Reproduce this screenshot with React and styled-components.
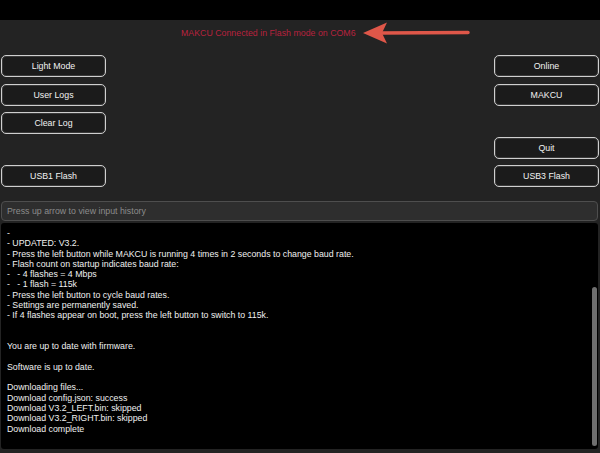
import styled, { createGlobalStyle } from 'styled-components';

const GlobalStyle = createGlobalStyle`
  html, body {
    margin: 0;
    padding: 0;
    background: #232323;
  }
  body {
    font-family: "Liberation Sans", Arial, sans-serif;
  }
`;

// --- layout ---

const Page = styled.div`
  width: 600px;
  height: 453px;
  display: flex;
  flex-direction: column;
  background: #232323;
  overflow: hidden;
`;

const TopBar = styled.div`
  height: 20px;
  background: #000;
  flex-shrink: 0;
`;

const StatusRow = styled.div`
  height: 35px;
  padding: 2px 0 0 181px;
  box-sizing: border-box;
  display: flex;
  align-items: flex-start;
`;

const StatusInner = styled.div`
  height: 22px;
  display: flex;
  align-items: center;
`;

const StatusText = styled.span`
  color: #b8223e;
  font-size: 8.8px;
  line-height: 12px;
`;

const Arrow = styled.svg`
  margin-left: 7px;
  display: block;
`;

const ButtonArea = styled.div`
  display: flex;
  justify-content: space-between;
  padding: 0 1px;
`;

const Column = styled.div`
  width: 105px;
  display: flex;
  flex-direction: column;
  gap: 6.5px;
`;

const Spacer = styled.div`
  height: ${(p) => p.$h}px;
`;

const Button = styled.button`
  height: 22px;
  width: 100%;
  box-sizing: border-box;
  background: #1b1b1b;
  color: #f2f2f2;
  border: 1px solid #cfcfcf;
  border-radius: 5px;
  box-shadow: inset 0 0 0 1px #3a3a3a;
  font-family: "Liberation Sans", Arial, sans-serif;
  font-size: 8.8px;
  padding: 0;
  cursor: pointer;
`;

const InputRow = styled.div`
  padding: 13px 2px 0 1px;
`;

const CommandInput = styled.input`
  width: 100%;
  height: 20px;
  box-sizing: border-box;
  background: #2e2e2e;
  border: 1px solid #4e4e4e;
  border-radius: 4px;
  color: #ddd;
  font-family: "Liberation Sans", Arial, sans-serif;
  font-size: 8.8px;
  padding: 0 5px;
  outline: none;

  &::placeholder {
    color: #8c8c8c;
  }
`;

const LogBox = styled.div`
  position: relative;
  margin: 2px 2px 0 1px;
  height: 226px;
  background: #000;
  border-radius: 3px;
  padding: 5px 6px;
  box-sizing: border-box;
  overflow: hidden;
`;

const LogLine = styled.div`
  color: #f0f0f0;
  font-size: 8.8px;
  line-height: 10.3px;
  height: 10.3px;
  white-space: pre;
`;

const ScrollThumb = styled.div`
  position: absolute;
  right: 1px;
  top: 64px;
  width: 5px;
  height: 159px;
  border-radius: 3px;
  background: #6f6f6f;
`;

const logLines = [
  '-',
  '- UPDATED: V3.2.',
  '- Press the left button while MAKCU is running 4 times in 2 seconds to change baud rate.',
  '- Flash count on startup indicates baud rate:',
  '-   - 4 flashes = 4 Mbps',
  '-   - 1 flash = 115k',
  '- Press the left button to cycle baud rates.',
  '- Settings are permanently saved.',
  '- If 4 flashes appear on boot, press the left button to switch to 115k.',
  '',
  '',
  'You are up to date with firmware.',
  '',
  'Software is up to date.',
  '',
  'Downloading files...',
  'Download config.json: success',
  'Download V3.2_LEFT.bin: skipped',
  'Download V3.2_RIGHT.bin: skipped',
  'Download complete',
];

function App() {
  return (
    <Page>
      <GlobalStyle />
      <TopBar />

      <StatusRow>
        <StatusInner>
          <StatusText>MAKCU Connected in Flash mode on COM6</StatusText>
          {/* 빨간 화살표 (주석 표시) */}
          <Arrow width="108" height="22" viewBox="0 0 108 22">
            <line x1="18" y1="11" x2="105" y2="10.5" stroke="#df5749" strokeWidth="3.5" strokeLinecap="round" />
            <polygon points="0,11 24,0.5 19,11 24,21.5" fill="#df5749" />
          </Arrow>
        </StatusInner>
      </StatusRow>

      <ButtonArea>
        <Column>
          <Button>Light Mode</Button>
          <Button>User Logs</Button>
          <Button>Clear Log</Button>
          <Spacer $h={18} />
          <Button>USB1 Flash</Button>
        </Column>
        <Column>
          <Button>Online</Button>
          <Button>MAKCU</Button>
          <Spacer $h={18} />
          <Button>Quit</Button>
          <Button>USB3 Flash</Button>
        </Column>
      </ButtonArea>

      <InputRow>
        <CommandInput placeholder="Press up arrow to view input history" />
      </InputRow>

      <LogBox>
        {logLines.map((line, i) => (
          <LogLine key={i}>{line}</LogLine>
        ))}
        <ScrollThumb />
      </LogBox>
    </Page>
  );
}

export default App;
